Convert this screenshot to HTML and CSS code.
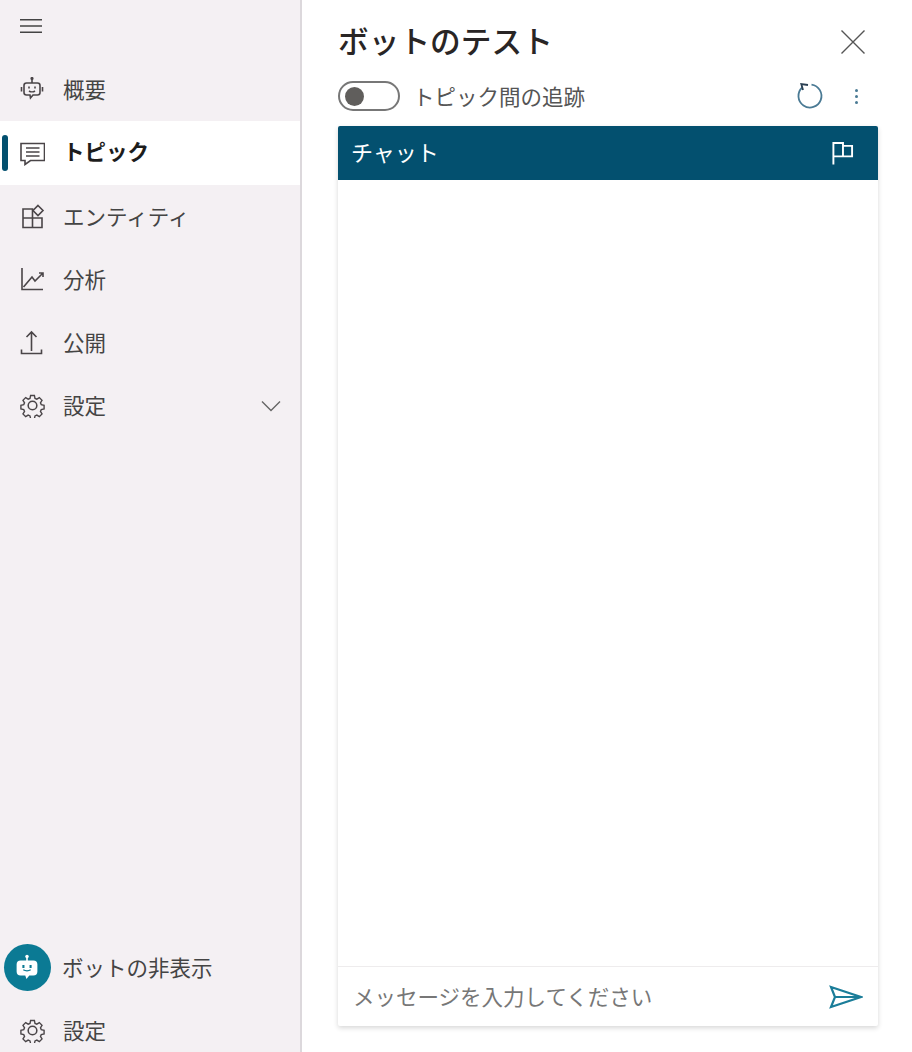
FILE: index.html
```html
<!DOCTYPE html>
<html lang="ja">
<head>
<meta charset="utf-8">
<title>ボットのテスト</title>
<link rel="stylesheet" href="styles.css">
</head>
<body>
<div class="app">
  <aside class="sidebar">
    <div class="hamburger">
      <svg class="ico-s" viewBox="0 0 22 14" width="22" height="14"><path d="M0 .7h22M0 7h22M0 13.300h22"/></svg>
    </div>
    <nav class="nav">
      <a class="nav-item">
        <svg class="ico" viewBox="0 0 25 25"><path d="M12 1v5"/><circle cx="12" cy="1.500" r=".8"/><path d="M6.500 6h11a2.500 2.500 0 0 1 2.500 2.500v7a2.500 2.500 0 0 1-2.500 2.500H13l-2.500 3-.5-3H6.500A2.500 2.500 0 0 1 4 15.500v-7A2.500 2.500 0 0 1 6.500 6z"/><path d="M1.500 10v4.500M22.500 10v4.500M9 9.500v2M15 9.500v2M9 14c1.500 1 4.500 1 6 0"/></svg>
        <span>概要</span>
      </a>
      <a class="nav-item active">
        <svg class="ico" viewBox="0 0 25 25"><path d="M1 2.500h23.500v17H10.500l-5.500 4v-4H1z"/><path d="M6 7h13.500M6 11h13.500M6 15h13.500"/></svg>
        <span>トピック</span>
      </a>
      <a class="nav-item">
        <svg class="ico" viewBox="0 0 25 25"><path d="M3 5h9.500v9H3zM3 14h9.500v9.500H3zM12.500 14H22v9.500h-9.500z"/><path d="M18 1.500l5 5-5 5-5-5z"/></svg>
        <span>エンティティ</span>
      </a>
      <a class="nav-item">
        <svg class="ico" viewBox="0 0 25 25"><path d="M2 1v21.500h21"/><path d="M3.500 20l8.500-10 3 4 8-8M19 6h4v4"/></svg>
        <span>分析</span>
      </a>
      <a class="nav-item">
        <svg class="ico" viewBox="0 0 25 25"><path d="M11.500 21V2M6.500 7l5-5 5 5M1.500 19.500v4h20v-4"/></svg>
        <span>公開</span>
      </a>
      <a class="nav-item">
        <svg class="ico" viewBox="0 0 26 26"><use href="#gear"/></svg>
        <span>設定</span>
        <svg class="chev" viewBox="0 0 20 12"><path d="M1 1.500l9 9 9-9"/></svg>
      </a>
    </nav>
    <div class="side-bottom">
      <a class="nav-item hide-bot">
        <span class="bot-badge">
          <svg class="bot-face" viewBox="0 0 26 26" width="30" height="30"><circle cx="13" cy="3" r="1.500" fill="#fff"/><path class="white" d="M12.300 3h1.400v4h-1.400zM7.500 6.500h11a3.500 3.500 0 0 1 3.500 3.500v6a3.500 3.500 0 0 1-3.500 3.500h-3.500l-2.500 3-1-3h-4a3.500 3.500 0 0 1-3.500-3.500v-6a3.500 3.500 0 0 1 3.500-3.500z"/><path class="dark" d="M9 10.500h1.800v2.500H9zM15.200 10.500H17v2.500h-1.800zM9.500 15c2 1.300 5 1.300 7 0l-.6-.9c-1.700 1-4.100 1-5.800 0z"/></svg>
        </span>
        <span>ボットの非表示</span>
      </a>
      <a class="nav-item">
        <svg class="ico" viewBox="0 0 26 26"><use href="#gear"/></svg>
        <span>設定</span>
      </a>
    </div>
  </aside>

  <main class="panel">
    <header class="panel-head">
      <h1>ボットのテスト</h1>
      <svg class="close" viewBox="0 0 26 26"><path d="M1.500 1.500l23 23M24.500 1.500l-23 23"/></svg>
    </header>
    <div class="tools">
      <span class="toggle"><span class="knob"></span></span>
      <span class="toggle-label">トピック間の追跡</span>
      <svg class="refresh" viewBox="0 0 26 26"><path d="M14.500 1.600A11.500 11.500 0 1 1 5.200 4.500"/><path class="strong" d="M11 2L4.300 1 6 7"/></svg>
      <span class="dots"><i></i><i></i><i></i></span>
    </div>
    <section class="chat">
      <div class="chat-head">
        <span class="chat-title">チャット</span>
        <svg class="flag" viewBox="0 0 24 26"><path d="M2.500 24.500V2h10v14M2.500 16h19.500V5H12.500"/></svg>
      </div>
      <div class="chat-body"></div>
      <div class="composer">
        <span class="placeholder">メッセージを入力してください</span>
        <svg class="send" viewBox="0 0 34 24"><path d="M2 2l30 10L2 22l4-10zM6 12h26"/></svg>
      </div>
    </section>
  </main>
</div>
<svg class="defs" width="0" height="0">
  <defs>
    <g id="gear">
      <circle cx="13" cy="13" r="4.500"/>
      <path d="M10.800 1.500h4.400l.7 3.300 2.100.9 2.900-1.800 3.100 3.100-1.800 2.900.9 2.100 3.300.7v4.400l-3.300.7-.9 2.100 1.800 2.900-3.100 3.100-2.900-1.800-2.100.9-.7 3.300h-4.400l-.7-3.300-2.100-.9-2.900 1.800-3.100-3.100 1.800-2.900-.9-2.100-3.300-.7v-4.400l3.300-.7.9-2.100-1.800-2.900 3.100-3.100 2.900 1.800 2.100-.9z" transform="translate(1.300 1.300) scale(.9)"/>
    </g>
  </defs>
</svg>
</body>
</html>
```
FILE: styles.css
```css
* { box-sizing: border-box; }
html, body { margin: 0; height: 100%; }
body {
  background: #fff;
  color: #333;
  font-family: "Noto Sans CJK JP", "Noto Sans", sans-serif;
  font-size: 21.5px;
  overflow: hidden;
}
.app { display: flex; height: 1052px; }
.defs { display: block; height: 0; }

.sidebar {
  width: 302px;
  flex: none;
  background: #f4f0f3;
  border-right: 2px solid #dcd8dc;
  display: flex;
  flex-direction: column;
  overflow: hidden;
}
.hamburger { height: 58px; padding: 19px 0 0 20px; }
.ico-s { display: block; fill: none; stroke: #444; stroke-width: 1.400; }
.nav { display: flex; flex-direction: column; }
.nav-item {
  height: 63px;
  display: flex;
  align-items: center;
  padding-left: 20px;
  gap: 18px;
  color: #444;
  flex: none;
}
.nav-item > span:last-of-type { padding-bottom: 3px; }
.nav-item.active {
  background: #fff;
  color: #1c1c1c;
  font-weight: 700;
  height: 64px;
  position: relative;
}
.nav-item.active > span { padding-bottom: 6px; }
.nav-item.active::before {
  content: "";
  position: absolute;
  left: 2px;
  top: 14px;
  width: 6px;
  height: 36px;
  border-radius: 3px;
  background: #03506f;
}
.ico { width: 25px; height: 25px; flex: none; fill: none; stroke: #4a4548; stroke-width: 1.600; }
.chev { width: 20px; height: 12px; margin-left: auto; margin-right: 19px; fill: none; stroke: #666; stroke-width: 1.400; }
.side-bottom { margin-top: auto; margin-bottom: -10px; display: flex; flex-direction: column; }
.hide-bot { padding-left: 4px; gap: 11px; }
.bot-badge {
  width: 47px;
  height: 47px;
  border-radius: 50%;
  background: #0b7a94;
  display: flex;
  align-items: center;
  justify-content: center;
  flex: none;
}
.bot-face { margin-right: 2px; }
.white { fill: #fff; }
.dark { fill: #0b7a94; }

.panel { flex: 1; padding: 0 34px 26px 36px; display: flex; flex-direction: column; min-width: 0; }
.panel-head { height: 80px; flex: none; display: flex; align-items: center; justify-content: space-between; padding: 4px 12px 0 0; }
.panel-head h1 { margin: 0 0 4px; font-size: 30.700px; font-weight: 500; color: #292525; line-height: 1; }
.close { width: 26px; height: 26px; fill: none; stroke: #555; stroke-width: 1.400; }
.tools { height: 46px; flex: none; display: flex; align-items: center; padding-bottom: 14px; }
.toggle { width: 62px; height: 30px; border: 2px solid #777; border-radius: 15px; display: flex; align-items: center; padding-left: 5px; flex: none; }
.knob { width: 19px; height: 19px; background: #605e5c; border-radius: 50%; }
.toggle-label { margin-left: 13px; color: #555; padding-bottom: 2px; }
.refresh { width: 26px; height: 26px; margin-left: auto; fill: none; stroke: #4a7a94; stroke-width: 1.800; overflow: visible; }
.strong { stroke: #2a3f52; }
.dots { display: flex; flex-direction: column; gap: 3px; margin: 0 20px 0 32px; }
.dots i { width: 3px; height: 3px; border-radius: 50%; background: #4a7a94; display: block; }

.chat {
  flex: 1;
  display: flex;
  flex-direction: column;
  border-radius: 2px;
  box-shadow: 0 2px 5px rgba(0,0,0,.16);
  min-height: 0;
}
.chat-head {
  height: 54px;
  flex: none;
  background: #03506f;
  color: #fff;
  display: flex;
  align-items: center;
  justify-content: space-between;
  padding: 0 24px 0 13px;
  border-radius: 2px 2px 0 0;
}
.chat-title { font-size: 22px; padding-bottom: 5px; }
.flag { width: 23px; height: 25px; fill: none; stroke: #fff; stroke-width: 2; }
.chat-body { flex: 1; }
.composer {
  height: 60px;
  flex: none;
  border-top: 1px solid #eeeced;
  display: flex;
  align-items: center;
  justify-content: space-between;
  padding: 0 15px 0 15px;
  color: #777;
}
.placeholder { padding-bottom: 3px; }
.send { width: 34px; height: 24px; fill: none; stroke: #1b7d99; stroke-width: 2.200; }
```
